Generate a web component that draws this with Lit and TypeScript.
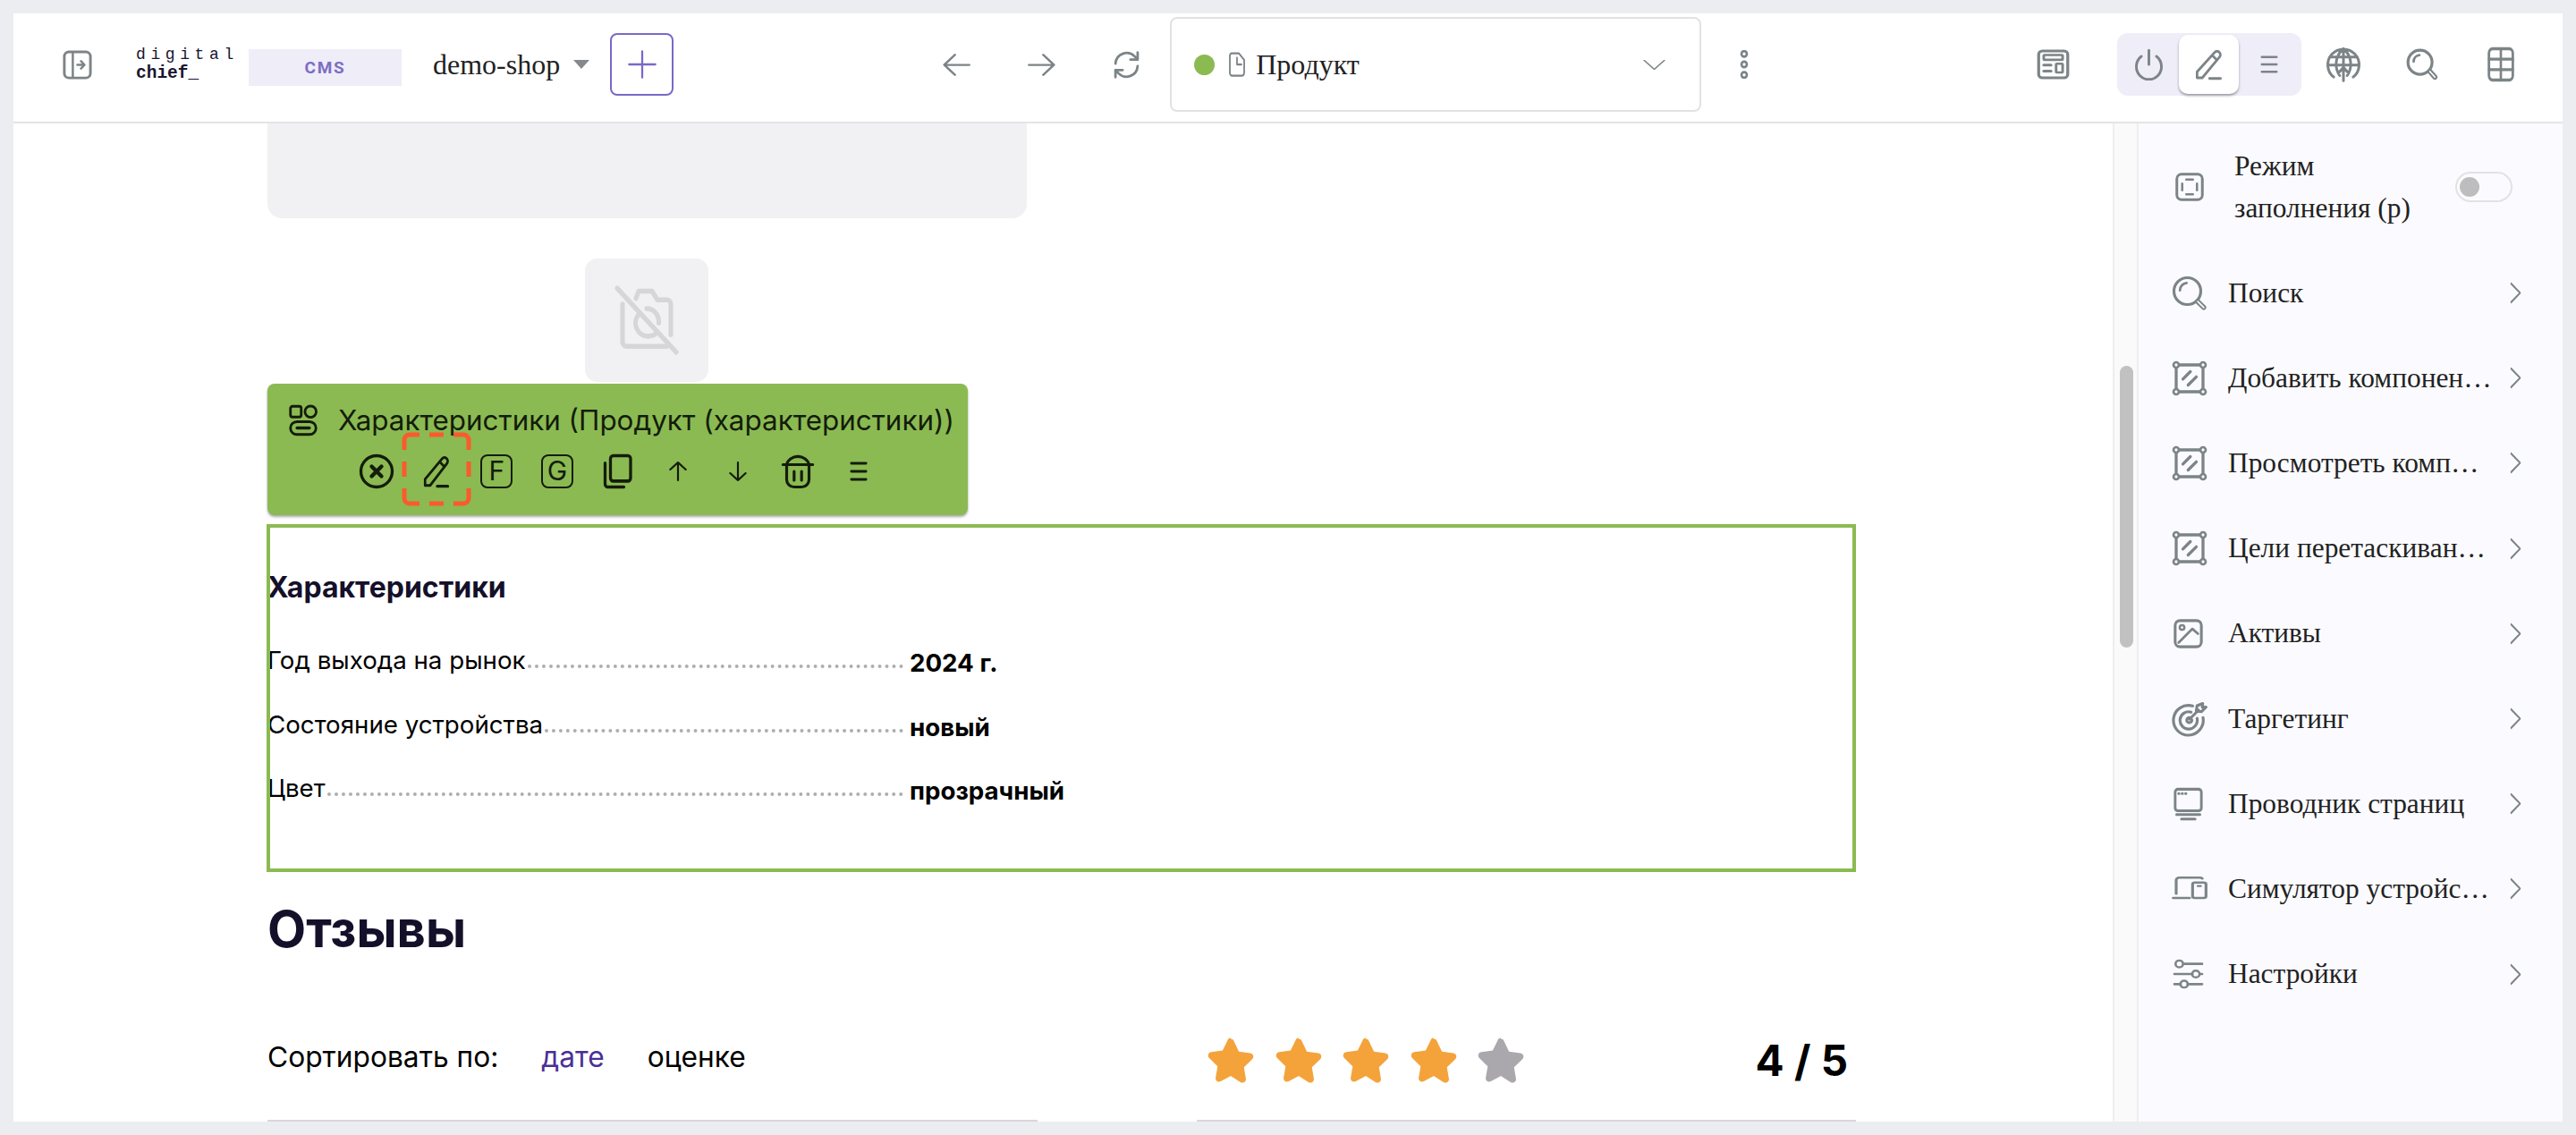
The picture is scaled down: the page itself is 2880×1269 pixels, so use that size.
import { LitElement, html, css, svg } from "lit";
import { customElement } from "lit/decorators.js";

const ic = (w: number, h: number, body: unknown, vb = "0 0 24 24") => html`<svg class="ic" width=${w} height=${h} viewBox=${vb} fill="none" stroke="currentColor" stroke-linecap="round" stroke-linejoin="round" preserveAspectRatio="none">${body}</svg>`;

const P = {
  collapse: svg`<rect x="2" y="2" width="20" height="20" rx="3.5" stroke-width="2"/><path d="M8.5 3v18M12 12h5M14.8 9.2 17.5 12l-2.7 2.8" stroke-width="1.7"/>`,
  back: svg`<path d="M23 12H2M11 2 2 12l9 10" stroke-width="2"/>`,
  fwd: svg`<path d="M1 12h21M13 2l9 10-9 10" stroke-width="2"/>`,
  refresh: svg`<path d="M3.5 11a8.6 8.6 0 0 1 14.6-5.6L20.5 8M20.5 2.5V8H15M20.5 13a8.6 8.6 0 0 1-14.6 5.6L3.5 16M3.5 21.5V16H9" stroke-width="1.9"/>`,
  file: svg`<path d="M7 2h8l6 6v11.5a2.5 2.5 0 0 1-2.5 2.5h-11A2.5 2.5 0 0 1 5 19.5v-15A2.5 2.5 0 0 1 7 2zM13 6v6h5" stroke-width="1.8"/>`,
  chev: svg`<path d="M2 4l10 16L22 4" stroke-width="1.8"/>`,
  dots: svg`<circle cx="6" cy="4" r="3" stroke-width="2.6"/><circle cx="6" cy="15" r="3" stroke-width="2.6"/><circle cx="6" cy="26" r="3" stroke-width="2.6"/>`,
  news: svg`<rect x="2" y="2" width="20" height="20" rx="2.5" stroke-width="2"/><rect x="5.5" y="5" width="13" height="3.6" rx=".5" stroke-width="1.8"/><rect x="14" y="11.5" width="4.5" height="6.5" rx=".5" stroke-width="1.8"/><path d="M5.5 12.5h5M5.5 17h5" stroke-width="2"/>`,
  power: svg`<path d="M12 1.5V12M6.2 6a9.6 9.6 0 1 0 11.6 0" stroke-width="2"/>`,
  pen: svg`<path d="M3 22v-4.5L16.5 3a2.4 2.4 0 0 1 3.6 0c1 1 1 2.6 0 3.6L7 22zM14.5 5.2l3.8 3.6M12.5 22.5h8.5" stroke-width="1.9"/>`,
  menu: svg`<path d="M2 3h20M2 12h20M2 21h20" stroke-width="2.8"/>`,
  globe: svg`<path d="M5.5 20.5A10.5 10.5 0 1 1 18.5 20.5M2 12.5h20M3.5 7h17M12 1.5V23M12 1.5c-6 5-6 13-2.5 18M12 1.5c6 5 6 13 2.5 18M8.5 18l3.5-4 3.5 4" stroke-width="1.8"/>`,
  search: svg`<circle cx="10.5" cy="10.5" r="8.5" stroke-width="2"/><path d="M6 10c0-2.5 1.8-4.2 4-4.5" stroke-width="1.8"/><path d="M17.5 17l3.5 4" stroke-width="3.6"/><path d="M17.5 17l3.5 4" stroke="#fff" stroke-width="1"/>`,
  searchSide: svg`<circle cx="10.5" cy="10.5" r="9" stroke-width="1.9"/><path d="M5.5 10c0-2.7 2-4.7 4.5-5" stroke-width="1.6"/><path d="M17.5 17.5l4 4" stroke-width="3.4"/><path d="M17.5 17.5l4 4" stroke="#fbfbff" stroke-width="1"/>`,
  grid: svg`<rect x="2" y="1.5" width="20" height="21" rx="3" stroke-width="2.1"/><path d="M12 1.5v21M2 8.5h20M2 15.5h20" stroke-width="2"/>`,
  fill: svg`<rect x="2.5" y="2.5" width="19" height="19" rx="3.5" stroke-width="2"/><path d="M9.5 6.5h5M9.5 17.5h5M6.5 9.5v5M17.5 9.5v5" stroke-width="1.7"/>`,
  comp: svg`<path d="M5 3h14M5 21h14M3 5v14M21 5v14" stroke-width="2"/><circle cx="3" cy="3" r="1.8" stroke-width="1.6"/><circle cx="21" cy="3" r="1.8" stroke-width="1.6"/><circle cx="3" cy="21" r="1.8" stroke-width="1.6"/><circle cx="21" cy="21" r="1.8" stroke-width="1.6"/><path d="M7.5 12.5l5-5M11 16.5l5.5-5.5" stroke-width="2"/>`,
  image: svg`<rect x="2.5" y="2.5" width="19" height="19" rx="3.5" stroke-width="2"/><circle cx="7.5" cy="7.5" r="1.7" stroke-width="1.6"/><path d="M5 18.5L15 8.5l4 3.5" stroke-width="1.8"/>`,
  target: svg`<path d="M14 3.2A10 10 0 1 0 21 11M13 7.3A5.8 5.8 0 1 0 17 11.5M12 11a1.7 1.7 0 1 0 1.5 1.5M12 12l6-6M17 3l-.5 3.5 3.5.5L23 4h-2.5l.3-2.5z" stroke-width="1.9"/>`,
  explorer: svg`<rect x="2.5" y="2" width="19" height="14.5" rx="2" stroke-width="1.9"/><path d="M5 5h.4M7.5 5h.4M10 5h.4M3.5 19h17M7 22h10" stroke-width="1.8"/>`,
  device: svg`<path d="M3 16V4.5A2 2 0 0 1 5 2.5h14a2 2 0 0 1 1.500.7M1 19.500h11" stroke-width="1.9"/><rect x="14" y="6.5" width="9" height="13" rx="1.5" stroke-width="1.9"/><path d="M17.5 9.5h2" stroke-width="1.6"/>`,
  sliders: svg`<path d="M9 4h13M2 12h13M20.5 12H22M2 20h4.5M11.5 20H22" stroke-width="1.9"/><circle cx="5.5" cy="4" r="2.7" stroke-width="1.7"/><circle cx="17.5" cy="12" r="2.7" stroke-width="1.7"/><circle cx="9" cy="20" r="2.7" stroke-width="1.7"/>`,
  right: svg`<path d="M4 2l16 10L4 22" stroke-width="2.4"/>`,
  shapes: svg`<rect x="2.5" y="1.5" width="8" height="8" rx="1.5" stroke-width="1.9"/><circle cx="17.5" cy="5.5" r="4.2" stroke-width="1.9"/><rect x="2.5" y="13" width="19" height="9.5" rx="4.75" stroke-width="1.9"/><path d="M7.5 17.7h9" stroke-width="2.4"/>`,
  close: svg`<circle cx="12" cy="12" r="10.5" stroke-width="2"/><path d="M8.7 8.7l6.6 6.6M15.3 8.7l-6.6 6.6" stroke-width="2.6"/>`,
  copy: svg`<rect x="7" y="1.5" width="15" height="17" rx="2" stroke-width="2.2"/><path d="M3 6.5V20.5a2 2 0 0 0 2 2h12" stroke-width="2.2"/>`,
  up: svg`<path d="M12 22V2M4 10l8-8 8 8" stroke-width="2"/>`,
  down: svg`<path d="M12 2v20M4 14l8 8 8-8" stroke-width="2"/>`,
  trash: svg`<path d="M2 7.5h20M4.5 7.5c.5-3 4-5.5 7.5-5.500s7 2.500 7.500 5.500M4.500 8v9.500a5 5 0 0 0 5 5h5a5 5 0 0 0 5-5V8M9.500 12v6M14.500 12v6" stroke-width="1.9"/>`,
  camoff: svg`<path d="M3 6.5v13A1.5 1.5 0 0 0 4.5 21h15M21 17V6.5A1.5 1.5 0 0 0 19.5 5H16l-2-3h-5L8 4.5M9 10a4.5 4.5 0 0 0 3.5 7.5c1.3 0 2.3-.3 3-1M12 8a4.5 4.5 0 0 1 4.5 5M1 1l22 22" stroke-width="1.7"/>`,
  star: svg`<path d="M12 1.200c.7 0 1.300.4 1.600 1.100l2.600 5.400 5.900.8c1.500.2 2.100 2 1 3.100l-4.300 4.200 1 5.900c.3 1.500-1.300 2.600-2.600 1.900L12 20.300l-5.200 2.800c-1.300.7-2.900-.4-2.600-1.900l1-5.900L.9 11.100c-1.100-1.100-.5-2.900 1-3.100l5.900-.8 2.600-5.400c.3-.7.900-1.100 1.600-1.100z" fill="currentColor" stroke="none"/>`,
  dash: svg`<path d="M3 20V9a6 6 0 0 1 6-6h11M31 3h16M58 3h11a6 6 0 0 1 6 6v11M75 33v17M75 63v11a6 6 0 0 1-6 6H58M47 80H31M20 80H9a6 6 0 0 1-6-6V63M3 50V33" stroke-width="5" stroke-linecap="butt"/>`,
};

const menu: [unknown, number, number, string][] = [
  [P.searchSide, 40, 40, "Поиск"],
  [P.comp, 40, 40, "Добавить компонен…"],
  [P.comp, 40, 40, "Просмотреть комп…"],
  [P.comp, 40, 40, "Цели перетаскиван…"],
  [P.image, 37, 37, "Активы"],
  [P.target, 40, 40, "Таргетинг"],
  [P.explorer, 37, 40, "Проводник страниц"],
  [P.device, 40, 32, "Симулятор устройс…"],
  [P.sliders, 37, 34, "Настройки"],
];

const specs: [string, string][] = [
  ["Год выхода на рынок", "2024 г."],
  ["Состояние устройства", "новый"],
  ["Цвет", "прозрачный"],
];

@customElement("app-root")
export class AppRoot extends LitElement {
  static styles = css`
    :host { display: block; height: 1269px; box-sizing: border-box; padding: 15px; background: #ecedf1; overflow: hidden; font-family: "Liberation Serif", serif; color: #222; }
    * { box-sizing: border-box; }
    .ic { display: block; flex: none; }
    .frame { height: 1239px; background: #fff; display: flex; flex-direction: column; }
    .top { height: 123px; flex: none; border-bottom: 2px solid #e4e4e6; padding: 0 0 7px 54px; display: flex; align-items: center; font-size: 32px; color: #7c8487; }
    .logo { width: 126px; margin-left: 48px; font-family: "Liberation Mono", monospace; color: #1a1530; line-height: 21px; }
    .logo div:first-child { font-size: 18px; letter-spacing: 5.6px; }
    .logo div:last-child { font-size: 19.5px; font-weight: 700; }
    .cms { width: 171px; height: 41px; background: #efedf8; color: #7c6fc4; display: flex; align-items: center; justify-content: center; font: 700 19px Roboto, sans-serif; letter-spacing: 1.8px; margin-top: 6px; }
    .shop { margin-left: 35px; color: #222; }
    .caret { width: 0; height: 0; border-left: 9px solid transparent; border-right: 9px solid transparent; border-top: 10px solid #85898c; margin-left: 15px; }
    .plus { margin-left: 23px; width: 71px; height: 70px; border: 2px solid #7b68c8; border-radius: 8px; color: #7b68c8; display: flex; align-items: center; justify-content: center; }
    .back { margin-left: 300px; }
    .fwd { margin-left: 64px; }
    .refresh { margin-left: 61px; }
    .select { margin-left: 31px; width: 594px; height: 106px; border: 2px solid #e2e2e2; border-radius: 8px; display: flex; align-items: center; padding: 0 37px 0 25px; }
    .dot { width: 23px; height: 23px; border-radius: 50%; background: #8bba52; }
    .file { margin-left: 12px; }
    .sel-text { margin-left: 10px; color: #222; flex: 1; }
    .more { margin-left: 42px; }
    .news { margin-left: 320px; }
    .seg { margin-left: 52px; width: 206px; height: 70px; background: #efedf8; border-radius: 12px; display: flex; align-items: center; padding-left: 18px; }
    .seg-on { margin-left: 16px; width: 67px; height: 66px; background: #fff; border-radius: 10px; box-shadow: 0 2px 3px rgba(0,0,0,.35); display: flex; align-items: center; justify-content: center; }
    .seg-menu { margin-left: 24px; }
    .globe { margin-left: 27px; }
    .search { margin-left: 49px; }
    .grid { margin-left: 53px; }
    .body { flex: 1; min-height: 0; display: flex; }
    .main { flex: 1; min-width: 0; overflow: hidden; padding-left: 284px; font-family: Inter, sans-serif; color: #14102a; }
    .panel { width: 849px; height: 106px; background: #f1f1f3; border-radius: 0 0 16px 16px; }
    .ph { margin: 45px 0 2px 355px; width: 138px; height: 138px; background: #f1f1f3; border-radius: 14px; display: flex; align-items: center; justify-content: center; color: #d6d6da; }
    .tb { width: 783px; height: 147px; background: #8bba52; border-radius: 8px; box-shadow: 0 2px 3px rgba(0,0,0,.35); color: #141c0c; margin-bottom: 11px; }
    .tb-head { display: flex; align-items: center; padding: 23px 0 0 22px; height: 59px; font-size: 31.4px; }
    .tb-head span { margin-left: 21px; white-space: nowrap; }
    .tb-row { display: flex; margin-left: 88px; margin-top: 19px; }
    .cell { width: 67.4px; height: 40px; display: flex; align-items: center; justify-content: center; position: relative; }
    .dash { position: absolute; left: -5px; top: -24px; color: #fb5a2c; }
    .key { width: 36px; height: 38px; border: 2.5px solid currentColor; border-radius: 8px; font: 400 30px/33px "Inter", sans-serif; text-align: center; }
    .box { width: 1775px; height: 387px; outline: 4px solid #8bba52; outline-offset: -3px; padding-top: 50px; color: #000; }
    .box h3 { margin: 0 0 27px; font-size: 32px; font-weight: 700; line-height: 40px; color: #14102a; }
    .row { display: flex; height: 71.6px; font-size: 27.7px; line-height: 40px; }
    .lab { width: 711px; display: flex; align-items: flex-start; flex: none; padding-top: 14px; white-space: nowrap; height: 57px; }
    .lead { flex: 1; height: 43px; margin-top: -14px; border-bottom: 4px dotted #aeaeae; margin-left: 2px; }
    .val { margin-left: 7px; padding-top: 17px; font-weight: 700; }
    h2 { margin: 32px 0 0; font-size: 56px; line-height: 66px; font-weight: 700; }
    .sort { margin-top: 79px; width: 1767px; height: 60px; display: flex; align-items: center; font-size: 31.7px; color: #000; }
    .sort-l { width: 1051px; display: flex; }
    .sort-a { margin-left: 48px; color: #4b2f96; }
    .sort-b { margin-left: 48px; color: #000; }
    .stars { display: flex; gap: 23.5px; color: #f4a33b; padding-top: 8px; }
    .stars .off { color: #aaa8ad; }
    .score { margin-left: auto; font-size: 47.5px; font-weight: 700; padding-top: 8px; }
    .lines { margin-top: 41px; display: flex; }
    .lines i { display: block; height: 2px; background: #d8d8dc; }
    .lines i:first-child { width: 861px; }
    .lines i:last-child { margin-left: 178px; width: 737px; }
    .track { width: 29px; flex: none; background: #fafafa; border-left: 2px solid #eee; border-right: 2px solid #eee; padding: 271px 0 0 6px; }
    .thumb { width: 15px; height: 315px; background: #c1c1c1; border-radius: 8px; }
    .side { width: 474px; flex: none; background: #fbfbff; font-size: 31.4px; color: #222; }
    .fillrow { height: 142px; display: flex; align-items: center; padding-left: 39px; color: #7c8487; }
    .fill-t { margin-left: 32px; width: 247px; line-height: 47px; color: #222; }
    .tog { width: 64px; height: 34px; border: 2px solid #e2e2e6; border-radius: 17px; padding: 4px 3px; }
    .tog i { display: block; width: 22px; height: 22px; border-radius: 50%; background: #bdbdbd; }
    .item { height: 95.2px; display: flex; align-items: center; color: #7c8487; padding-right: 45px; }
    .ico { width: 100px; padding-left: 37px; flex: none; }
    .label { color: #222; white-space: nowrap; }
    .arr { margin-left: auto; }
  `;

  render() {
    return html`<div class="frame">
      <header class="top">
        ${ic(35, 35, P.collapse)}
        <div class="logo"><div>digital</div><div>chief_</div></div>
        <div class="cms">CMS</div>
        <div class="shop">demo-shop</div>
        <div class="caret"></div>
        <div class="plus">${ic(32, 32, svg`<path d="M12 1v22M1 12h22" stroke-width="1.7"/>`)}</div>
        <div class="back">${ic(32, 27, P.back)}</div>
        <div class="fwd">${ic(32, 27, P.fwd)}</div>
        <div class="refresh">${ic(35, 35, P.refresh)}</div>
        <div class="select">
          <div class="dot"></div>
          <div class="file">${ic(24, 30, P.file)}</div>
          <div class="sel-text">Продукт</div>
          ${ic(27, 15, P.chev)}
        </div>
        <div class="more">${ic(12, 32, P.dots, "0 0 12 30")}</div>
        <div class="news">${ic(39, 36, P.news)}</div>
        <div class="seg">
          ${ic(35, 36, P.power)}
          <div class="seg-on">${ic(35, 36, P.pen)}</div>
          <div class="seg-menu">${ic(20, 22, P.menu)}</div>
        </div>
        <div class="globe">${ic(40, 40, P.globe)}</div>
        <div class="search">${ic(38, 38, P.search)}</div>
        <div class="grid">${ic(32, 40, P.grid)}</div>
      </header>
      <div class="body">
        <main class="main">
          <div class="panel"></div>
          <div class="ph">${ic(72, 78, P.camoff)}</div>
          <div class="tb">
            <div class="tb-head">${ic(36, 36, P.shapes)}<span>Характеристики (Продукт (характеристики))</span></div>
            <div class="tb-row">
              <div class="cell">${ic(40, 40, P.close)}</div>
              <div class="cell">${ic(34, 38, P.pen)}<div class="dash">${ic(78, 83, P.dash, "0 0 78 83")}</div></div>
              <div class="cell"><div class="key">F</div></div>
              <div class="cell"><div class="key">G</div></div>
              <div class="cell">${ic(36, 40, P.copy)}</div>
              <div class="cell">${ic(26, 24, P.up)}</div>
              <div class="cell">${ic(26, 24, P.down)}</div>
              <div class="cell">${ic(40, 40, P.trash)}</div>
              <div class="cell">${ic(20, 24, P.menu)}</div>
            </div>
          </div>
          <section class="box">
            <h3>Характеристики</h3>
            ${specs.map(([k, v]) => html`<div class="row"><div class="lab">${k}<div class="lead"></div></div><div class="val">${v}</div></div>`)}
          </section>
          <h2>Отзывы</h2>
          <div class="sort">
            <div class="sort-l"><span>Сортировать по:</span><span class="sort-a">дате</span><span class="sort-b">оценке</span></div>
            <div class="stars">
              ${[1, 2, 3, 4, 5].map((n) => html`<span class=${n === 5 ? "off" : ""}>${ic(52, 52, P.star)}</span>`)}
            </div>
            <div class="score">4 / 5</div>
          </div>
          <div class="lines"><i></i><i></i></div>
        </main>
        <div class="track"><div class="thumb"></div></div>
        <aside class="side">
          <div class="fillrow">
            ${ic(36, 36, P.fill)}
            <div class="fill-t">Режим заполнения (р)</div>
            <div class="tog"><i></i></div>
          </div>
          ${menu.map(([p, w, h, t]) => html`<div class="item"><div class="ico">${ic(w, h, p)}</div><div class="label">${t}</div><div class="arr">${ic(15, 25, P.right)}</div></div>`)}
        </aside>
      </div>
    </div>`;
  }
}
